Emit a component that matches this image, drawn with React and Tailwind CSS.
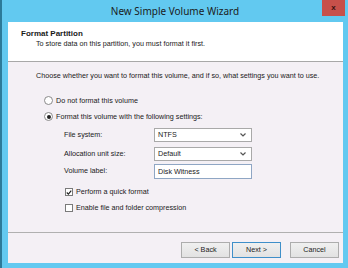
import { useState } from 'react'

function Combo({ value }) {
  return (
    <div className="flex h-[14px] w-[98px] items-center justify-between border border-[#a9a9a9] bg-white pl-[3px] pr-[5px]">
      <span>{value}</span>
      <svg className="h-[4px] w-[6px]" viewBox="0 0 6 4" fill="none" stroke="#555" strokeWidth="1.2">
        <path d="M0.5 0.5 L3 3 L5.5 0.5" />
      </svg>
    </div>
  )
}

function Radio({ checked }) {
  return (
    <span className="flex h-[9px] w-[9px] shrink-0 items-center justify-center rounded-full border border-[#8a8a8a] bg-white">
      {checked ? <span className="h-[4px] w-[4px] rounded-full bg-[#222]" /> : null}
    </span>
  )
}

function Check({ checked }) {
  return (
    <span className="flex h-[8px] w-[8px] shrink-0 items-center justify-center border border-[#7a7a7a] bg-white">
      {checked ? (
        <svg className="h-[7px] w-[7px]" viewBox="0 0 8 8" fill="none" stroke="#222" strokeWidth="1.6">
          <path d="M1 4 L3.2 6.2 L7 1.5" />
        </svg>
      ) : null}
    </span>
  )
}

function Btn({ children, primary }) {
  return (
    <button
      className={`flex h-[16px] w-[49px] items-center justify-center border bg-gradient-to-b from-[#f0f0f0] to-[#e2e2e2] text-[#222] ${
        primary ? 'border-[#3f8fc9]' : 'border-[#adadad]'
      }`}
    >
      {children}
    </button>
  )
}

export default function App() {
  const [mode, setMode] = useState('format')
  const [label, setLabel] = useState('Disk Witness')

  return (
    <div
      className="flex h-[268px] w-[348px] flex-col overflow-hidden border-l-2 border-[#2c7a99] bg-[#62c9f0] text-[7.2px] text-[#1a1a1a]"
      style={{ fontFamily: '"Liberation Sans", Arial, sans-serif' }}
    >
      {/* Title bar */}
      <div className="relative flex h-[22px] shrink-0 items-center justify-center">
        <span className="text-[10px] text-[#1b1b1b]" style={{ fontFamily: '"Noto Sans", sans-serif' }}>
          New Simple Volume Wizard
        </span>
        <div className="absolute right-[3px] top-0 flex h-[16px] w-[23px] items-center justify-center bg-[#c7504a]">
          <span className="text-[8px] font-bold text-[#3a1010]">x</span>
        </div>
      </div>

      {/* Client area */}
      <div className="ml-[6px] mr-[5px] flex h-[241px] flex-col bg-[#f4f0f5]">
        {/* Header */}
        <div className="flex h-[40px] shrink-0 flex-col border-b border-[#a8a8a8] bg-white pl-[13px] pt-[7px]">
          <span className="text-[8px] font-bold leading-[10px]">Format Partition</span>
          <span className="ml-[15px] leading-[10px]">To store data on this partition, you must format it first.</span>
        </div>

        {/* Body */}
        <div className="flex flex-1 flex-col pl-[28px] pt-[9px]">
          <span className="leading-[10px]">
            Choose whether you want to format this volume, and if so, what settings you want to use.
          </span>

          <div className="ml-[8px] mt-[15px] flex flex-col gap-[7px]">
            <label className="flex items-center gap-[3px]" onClick={() => setMode('none')}>
              <Radio checked={mode === 'none'} />
              <span className="leading-[9px]">Do not format this volume</span>
            </label>
            <label className="flex items-center gap-[3px]" onClick={() => setMode('format')}>
              <Radio checked={mode === 'format'} />
              <span className="leading-[9px]">Format this volume with the following settings:</span>
            </label>
          </div>

          <div className="ml-[28px] mt-[7px] flex flex-col">
            <div className="flex items-center">
              <span className="w-[90px]">File system:</span>
              <Combo value="NTFS" />
            </div>
            <div className="mt-[5px] flex items-center">
              <span className="w-[90px]">Allocation unit size:</span>
              <Combo value="Default" />
            </div>
            <div className="mt-[3px] flex items-center">
              <span className="w-[90px]">Volume label:</span>
              <input
                value={label}
                onChange={(e) => setLabel(e.target.value)}
                className="h-[15px] w-[98px] border border-[#8fa6c4] bg-white pl-[3px] text-[7.2px] outline-none"
              />
            </div>
          </div>

          <div className="ml-[29px] mt-[9px] flex flex-col gap-[8px]">
            <div className="flex items-center gap-[3px]">
              <Check checked />
              <span className="leading-[8px]">Perform a quick format</span>
            </div>
            <div className="flex items-center gap-[3px]">
              <Check />
              <span className="leading-[8px]">Enable file and folder compression</span>
            </div>
          </div>
        </div>

        {/* Footer */}
        <div className="flex h-[31px] shrink-0 items-start justify-end gap-[9px] border-t border-[#b0b0b0] pr-[4px] pt-[9px]">
          <div className="flex gap-[2px]">
            <Btn>&lt; Back</Btn>
            <Btn primary>Next &gt;</Btn>
          </div>
          <Btn>Cancel</Btn>
        </div>
      </div>
    </div>
  )
}
